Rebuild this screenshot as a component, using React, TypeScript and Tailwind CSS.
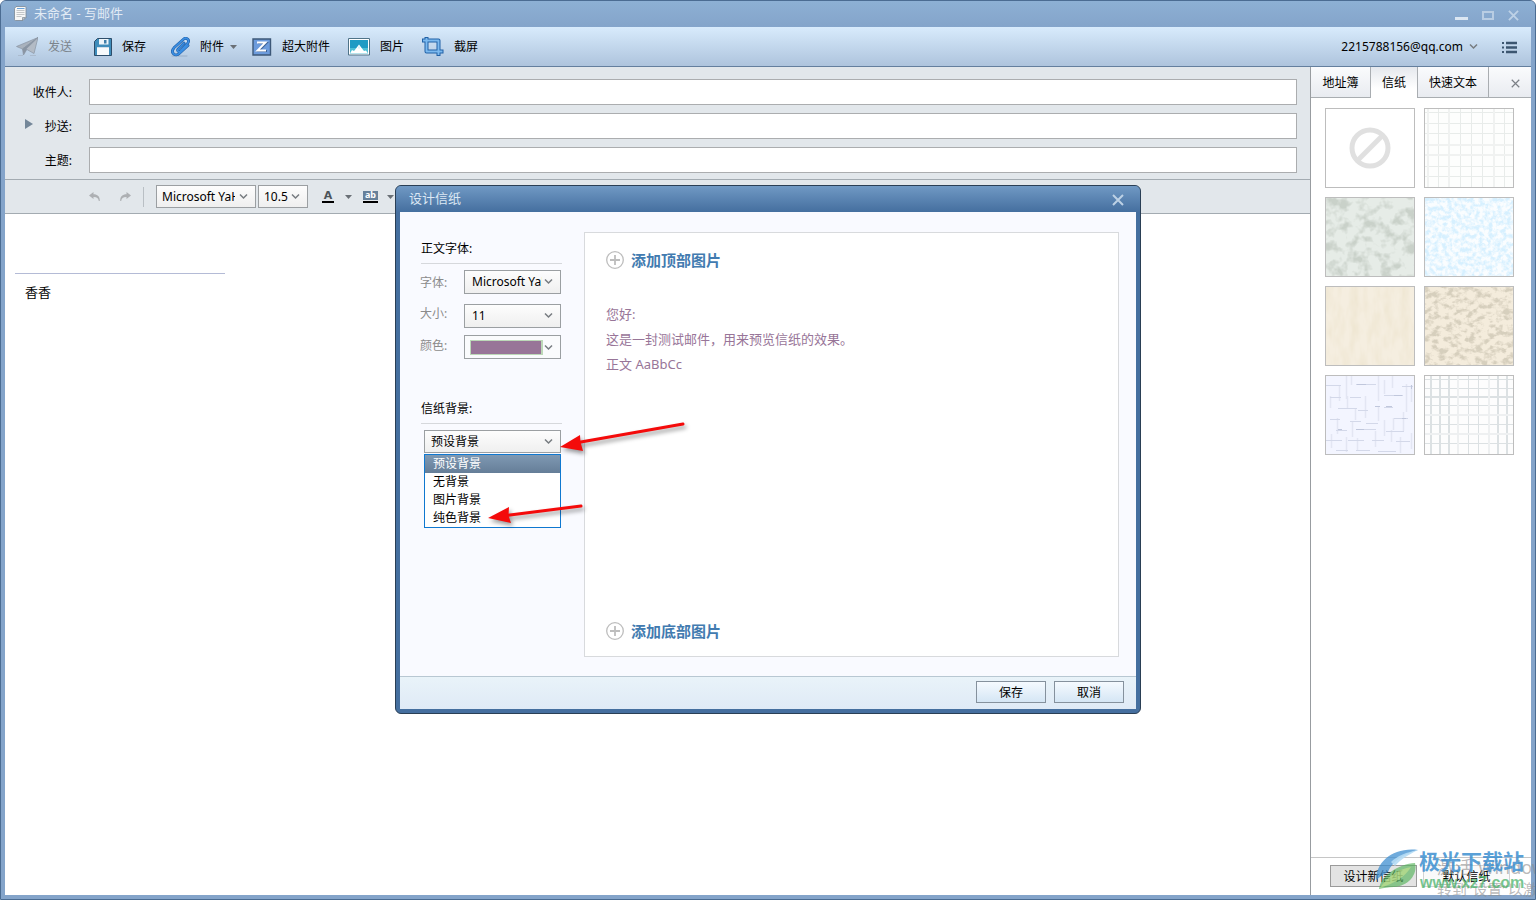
import React from 'react';

const STACK = 'font-["Noto_Sans","Noto_Sans_CJK_SC",sans-serif]';

/* ---------- small glyphs ---------- */

const Chevron: React.FC<{ className?: string }> = ({ className = '' }) => (
  <svg className={className} width="9" height="7" viewBox="0 0 9 7" fill="none" stroke="#777c80" strokeWidth="1.5">
    <path d="M1 1.5 4.5 5 8 1.5" />
  </svg>
);

const Caret: React.FC<{ className?: string }> = ({ className = '' }) => (
  <svg className={className} width="7" height="6" viewBox="0 0 7 6" fill="#6a7076">
    <path d="M0 1h7L3.500 5z" />
  </svg>
);

const CloseMark: React.FC<{ size: number; color: string; width: number }> = ({ size, color, width }) => (
  <svg width={size} height={size} viewBox="0 0 12 12" fill="none" stroke={color} strokeWidth={width}>
    <path d="M1 1 11 11M11 1 1 11" />
  </svg>
);

const PlusCircle: React.FC = () => (
  <svg width="18" height="18" viewBox="0 0 18 18" fill="none" stroke="#bdbdbd">
    <circle cx="9" cy="9" r="8.300" strokeWidth="1.300" />
    <path d="M9 4v10M4 9h10" strokeWidth="1.800" />
  </svg>
);

const NoteIcon: React.FC = () => (
  <svg width="13" height="15" viewBox="0 0 13 15">
    <path d="M2 .500h9a1 1 0 0 1 1 1v10l-3 3h-7.500a1 1 0 0 1-1-1v-11z" fill="#f6f7f7" stroke="#7b8894" strokeWidth=".8" />
    <path d="M3 2.500h7.500" stroke="#6aa3da" />
    <path d="M2.500 4.500h8M2.500 6.500h8M2.500 8.500h8M2.500 10.500h5" stroke="#c3c6c8" />
    <path d="M8.500 14v-2.500h3z" fill="#cfd3d6" stroke="#7b8894" strokeWidth=".7" />
  </svg>
);

/* ---------- toolbar icons ---------- */

const SendIcon: React.FC = () => (
  <svg width="22" height="19" viewBox="0 0 22 19">
    <path d="M2 18.500h5M14 18.500h6" stroke="#a7b6c8" strokeWidth=".8" />
    <path d="M.500 9.500 22 .500 6.500 12z" fill="#a9b2bd" stroke="#8995a3" strokeWidth=".7" />
    <path d="M6.500 12 22 .500 10.500 13 7.500 18z" fill="#8a95a3" stroke="#8995a3" strokeWidth=".7" />
    <path d="M10 12 22 .500 18 16.500z" fill="#b3bbc5" stroke="#8995a3" strokeWidth=".7" />
  </svg>
);

const SaveIcon: React.FC = () => (
  <svg width="18" height="18" viewBox="0 0 18 18">
    <path d="M3.500.500h14v17h-17v-14z" fill="#3f8dbb" stroke="#2d4d6a" />
    <path d="M5 1h9.500v5.500h-9.500z" fill="#eef5fa" />
    <path d="M10 2h2.500v3.500h-2.500z" fill="#3f7ea8" />
    <path d="M3 9h12v8h-12z" fill="#f7fafc" />
    <path d="M3 9.500h12" stroke="#cfdde7" />
  </svg>
);

const ClipIcon: React.FC = () => (
  <svg width="19" height="20" viewBox="0 0 19 20" fill="none" strokeLinecap="round">
    <path d="M1 19h15" stroke="#8fa6bf" strokeWidth=".8" />
    <path
      d="M13 6 7.200 12c-1.500 1.800.700 3.700 2.300 2.100L16.500 6.500c3-3.500-1.300-6.800-4-4.300L3 10.800c-4.200 5 1.500 9.500 5.500 5.500L17 8.500"
      stroke="#1f5fa8"
      strokeWidth="2.800"
    />
    <path
      d="M13 6 7.200 12c-1.500 1.800.700 3.700 2.300 2.100L16.500 6.500c3-3.500-1.300-6.800-4-4.300L3 10.800c-4.200 5 1.500 9.500 5.500 5.500L17 8.500"
      stroke="#3b8fe3"
      strokeWidth="1.600"
    />
  </svg>
);

const BigFileIcon: React.FC = () => (
  <svg width="20" height="18" viewBox="0 0 20 18" fill="none">
    <path d="M1 1h17.500v16h-17.500z" fill="#6c9bdc" stroke="#3d5878" strokeWidth="1.400" />
    <path d="M6 5h8.500L6.500 13H15" stroke="#3f6396" strokeWidth="2" />
    <path d="M5 4.500h8.500L5.500 12.500H14" stroke="#fff" strokeWidth="1.900" />
  </svg>
);

const PictureIcon: React.FC = () => (
  <svg width="22" height="18" viewBox="0 0 22 18">
    <path d="M.500.500h21v16.500h-21z" fill="#fff" stroke="#4f7388" />
    <path d="M2 2h18v13.500h-18z" fill="#1e9bc4" />
    <path d="M2 10h18v5.500h-18z" fill="#4dbfd6" />
    <path d="M2 15.500 4 12l2 1 2-2.500 3-4 3 4 2 2.500 2-.5 2 3z" fill="#fff" />
    <path d="M11 7.500 9.500 11l1.500-1 1.500 1.500z" fill="#d4eef5" />
  </svg>
);

const CropIcon: React.FC = () => (
  <svg width="22" height="19" viewBox="0 0 22 19" fill="none" strokeLinejoin="round">
    <path d="M4.500 0v14.500h17M0 3.500h16.500V19" stroke="#2161a6" strokeWidth="4" />
    <path d="M4.500 1v13.500h16M1 3.500h15.500V18" stroke="#7bb9ef" strokeWidth="2" />
  </svg>
);

const ListIcon: React.FC = () => (
  <svg width="15" height="13" viewBox="0 0 15 13" stroke="#3c5670" fill="none">
    <path d="M0 2h2M0 6.500h2M0 11h2" strokeWidth="2" />
    <path d="M4 2h11M4 6.500h11M4 11h11" strokeWidth="2.600" />
  </svg>
);

const TurnArrow: React.FC<{ flip?: boolean }> = ({ flip }) => (
  <svg width="12" height="10" viewBox="0 0 12 10" className={flip ? '-scale-x-100' : ''}>
    <path d="M0 3.500 4.500 0v2.300c4 0 6.500 2.200 6.300 6.700h-1C9.500 6 7.800 4.800 4.500 4.900V7z" fill="#adb0b3" />
  </svg>
);

type ToolProps = { icon: React.ReactNode; label: string; className?: string; disabled?: boolean; menu?: boolean };

const Tool: React.FC<ToolProps> = ({ icon, label, className = '', disabled, menu }) => (
  <button type="button" disabled={disabled} className={`flex items-center gap-2.5 ${disabled ? 'text-[#7b848c]' : 'text-black'} ${className}`}>
    {icon}
    <span>{label}</span>
    {menu && <Caret className="-ml-1" />}
  </button>
);

/* ---------- form pieces ---------- */

const Field: React.FC<{ id: string; label: string; expandable?: boolean }> = ({ id, label, expandable }) => (
  <div className="flex items-center">
    <div className="flex w-[84px] items-center justify-end pt-0.5 pr-[17px]">
      {expandable && (
        <button type="button" aria-label={label} className="mr-3 mb-1.5">
          <svg width="8" height="10" viewBox="0 0 8 10" fill="#748799">
            <path d="M0 0 8 5 0 10z" />
          </svg>
        </button>
      )}
      <label htmlFor={id}>{label}:</label>
    </div>
    <input id={id} type="text" className="h-[26px] min-w-0 flex-1 border border-[#abadaf] bg-white px-2 outline-none" />
  </div>
);

type PickerProps = { id: string; value: string; className: string; selectClass: string; name?: string };

const Picker: React.FC<PickerProps> = ({ id, value, className, selectClass, name }) => (
  <div className={`relative ${className}`}>
    <select
      id={id}
      aria-label={name}
      defaultValue={value}
      className={`block w-full appearance-none overflow-hidden border border-[#9b9fa2] bg-linear-to-b from-[#fdfdfd] to-[#efefef] whitespace-nowrap text-black outline-none ${selectClass}`}
    >
      <option>{value}</option>
    </select>
    <Chevron className="pointer-events-none absolute top-2 right-2" />
  </div>
);

/* ---------- stationery swatches ---------- */

const Noise: React.FC<{ id: string; freq: string; seed: number; base: string; matrix: string; octaves?: number }> = ({
  id,
  freq,
  seed,
  base,
  matrix,
  octaves = 3,
}) => (
  <>
    <filter id={id} x="0" y="0" width="100%" height="100%" colorInterpolationFilters="sRGB">
      <feTurbulence type="fractalNoise" baseFrequency={freq} numOctaves={octaves} seed={seed} />
      <feColorMatrix values={matrix} />
    </filter>
    <rect width="88" height="78" fill={base} />
    <rect width="88" height="78" filter={`url(#${id})`} />
  </>
);

const papers: { name: string; art: React.ReactNode }[] = [
  {
    name: '无',
    art: (
      <g fill="none" stroke="#e0e0e0" strokeWidth="5">
        <circle cx="44" cy="39" r="18" />
        <path d="M32 51 56 27" />
      </g>
    ),
  },
  {
    name: '浅色方格',
    art: (
      <g fill="none" stroke="#e8ecea">
        <rect width="88" height="78" fill="#fdfefd" stroke="none" />
        <path d="M13.500 0v78M35.500 0v78M46.500 0v78M57.500 0v78M79.500 0v78M0 3.500h88M0 14.500h88M0 24.500h88M0 57.500h88M0 67.500h88" />
        <path d="M3 0v78M24 0v78M69 0v78M0 36h88M0 46h88" stroke="#f0f2f1" strokeWidth="2" />
      </g>
    ),
  },
  {
    name: '灰绿',
    art: <Noise id="moss" freq="0.09" seed={8} base="#e6ece7" matrix="0 0 0 0 .79 0 0 0 0 .82 0 0 0 0 .79 4 0 0 0 -1.800" />,
  },
  {
    name: '浅蓝',
    art: <Noise id="ice" freq="0.22" seed={5} base="#fafdff" matrix="0 0 0 0 .84 0 0 0 0 .94 0 0 0 0 1 3 0 0 0 -1.100" />,
  },
  {
    name: '米色',
    art: <Noise id="sand" freq="0.12 0.04" seed={4} base="#f5eee0" matrix="0 0 0 0 .93 0 0 0 0 .895 0 0 0 0 .81 1.500 0 0 0 -.5" />,
  },
  {
    name: '石纹',
    art: <Noise id="stone" freq="0.14 0.18" seed={11} base="#f4ecdc" matrix="0 0 0 0 .84 0 0 0 0 .81 0 0 0 0 .74 4 0 0 0 -1.800" />,
  },
  {
    name: '织纹',
    art: (
      <g fill="none" stroke="#e3e6f3">
        <rect width="88" height="78" fill="#f3f5ff" stroke="none" />
        <path
          strokeWidth="1.500"
          d="M20.500 0v23M25.500 0v9M52.500 0v25M58.500 4v14M66.500 0v12M13.500 9v16M80.500 8v28M85.500 9v17M29.500 32v12M39.500 20v22M4.500 20v12M21.500 20v13M52.500 30v15M58.500 44v16M67.500 42v12M77.500 36v19M11.500 42v16M26.500 46v15M49.500 55v16M65.500 54v12M20.500 61v15M31.500 62v12M74.500 61v16M85.500 57v16M5.500 58v14"
        />
        <path
          stroke="#d3d8e9"
          d="M30 8.500h20M0 9.500h15M58 19.500h19M4 21.500h11M24 21.500h11M76 10.500h11M12 32.500h19M32 34.500h10M58 31.500h9M4 43.500h10M24 45.500h11M40 47.500h12M68 42.500h14M10 54.500h11M30 53.500h20M60 55.500h18M0 64.500h16M22 64.500h16M46 64.500h12M70 65.500h14M10 74.500h12M30 74.500h14M52 75.500h18"
        />
        <path d="M31 8.500h9M49 30.500h5M60 30.500h6M68 19.500h8M76 42.500h4M30 53.500h8M12 53.500h4M85.500 9v4" stroke="#c0c7dc" />
      </g>
    ),
  },
  {
    name: '方格',
    art: (
      <g fill="none" stroke="#dce1e3">
        <rect width="88" height="78" fill="#fdfdfd" stroke="none" />
        <path d="M43.500 0v78M53.500 0v78M0 3.500h88M0 12.500h88M0 29.500h88M0 48.500h88M0 67.500h88" />
        <path d="M6 0v78M15 0v78M24 0v78M73 0v78M82 0v78M0 21h88" strokeWidth="2" />
        <path d="M33 0v78M64 0v78M0 39h88M0 58h88" stroke="#eef0f1" strokeWidth="2" />
      </g>
    ),
  },
];

const Watermark: React.FC = () => (
  <div className="pointer-events-none absolute right-0 bottom-0 h-[52px] w-[160px] overflow-hidden">
    <div className="absolute top-[8px] left-[62px] text-[18px] leading-6 whitespace-nowrap text-[#8c8c8c]/60">激活 Windows</div>
    <div className="absolute top-[32px] left-[62px] text-[15px] leading-5 whitespace-nowrap text-[#8c8c8c]/60">转到“设置”以激活</div>
    <svg className="absolute top-0 left-0" width="46" height="44" viewBox="0 0 46 44">
      <path d="M1 33C1 15 18 0 43 3 28 7 17 15 13 25 10 27 6 29 1 33z" fill="#3f8fd0" opacity=".75" />
      <path d="M16 15C22 9 32 5 43 3 33 8 26 12 20 19z" fill="#b5dcf4" opacity=".9" />
      <path d="M4 42C6 28 24 17 40 16c3 12-7 23-21 24-6 0-10 1-15 2z" fill="#56b45a" opacity=".65" />
      <path d="M5 41c8-12 19-19 31-21-6 10-16 16-31 21z" fill="#c9e58e" opacity=".6" />
    </svg>
    <div className="absolute top-[2px] left-[44px] text-[21px] leading-6 font-bold whitespace-nowrap text-[#3c8fd0]/85">极光下载站</div>
    <div className='absolute top-[26px] left-[45px] font-["Liberation_Sans",sans-serif] text-[16px] leading-5 font-bold text-[#4ab36a]/75'>www.xz7.com</div>
  </div>
);

const StationeryPanel: React.FC = () => (
  <aside className="flex w-[221px] shrink-0 flex-col border-l border-[#989ca0] bg-white">
    <div role="tablist" className="flex h-[31px] shrink-0 bg-linear-to-b from-[#fafbfd] to-[#e8ebf0]">
      <button role="tab" type="button" className="w-[60px] border-r border-b border-[#a9adb1] pt-0.5">地址簿</button>
      <button role="tab" type="button" aria-selected="true" className="w-[46px] bg-linear-to-b from-[#e5e8ed] to-white to-70% pt-px">信纸</button>
      <button role="tab" type="button" className="w-[72px] border-x border-b border-[#a9adb1] pt-0.5">快速文本</button>
      <button type="button" aria-label="关闭" className="flex flex-1 items-center justify-center border-b border-[#a9adb1] pt-0.5 pl-2.5">
        <CloseMark size={9} color="#7b8086" width={1.6} />
      </button>
    </div>

    <div className="grid flex-1 grid-cols-[90px_90px] content-start gap-[9px] px-[14px] pt-[10px]">
      {papers.map((p) => (
        <button key={p.name} type="button" aria-label={p.name} className="h-20 border border-[#bdbdbd] bg-white">
          <svg width="88" height="78" viewBox="0 0 88 78">{p.art}</svg>
        </button>
      ))}
    </div>

    <div className="flex h-[38px] shrink-0 gap-1.5 border-t border-[#c6c6c6] pt-[7px] pl-[19px]">
      <button type="button" className="h-[22px] w-[87px] border border-[#9a9a9a] bg-[#e3e3e3] pt-0.5">设计新信纸</button>
      <button type="button" className="h-[22px] w-[87px] border border-[#d4d4d4] bg-[#fafafa] pt-0.5">默认信纸</button>
    </div>
  </aside>
);

/* ---------- stationery dialog ---------- */

const backgrounds = ['预设背景', '无背景', '图片背景', '纯色背景'];

const Pointer: React.FC<{ className: string; width: number; height: number; shaft: string; head: string }> = ({ className, width, height, shaft, head }) => (
  <svg className={`pointer-events-none absolute z-20 overflow-visible drop-shadow-[2px_3px_2px_rgba(0,0,0,0.4)] ${className}`} width={width} height={height}>
    <path d={shaft} stroke="#f40b0b" strokeWidth="3" strokeLinecap="round" />
    <path d={head} fill="#f40b0b" />
  </svg>
);

const DesignDialog: React.FC = () => (
  <div className="absolute inset-0 flex items-center justify-center pb-px">
    <div role="dialog" aria-label="设计信纸" className="relative flex h-[529px] w-[746px] flex-col rounded-md border border-[#2a3f55] bg-[#456f9f] px-1 pb-1">
      <header className="-mx-1 flex h-[26px] shrink-0 items-center justify-between rounded-t-[5px] bg-linear-to-b from-[#7099c4] to-[#456f9f] pr-4 pb-0.5 pl-[13px] text-[13px] text-[#dce8f4]">
        <h2>设计信纸</h2>
        <button type="button" aria-label="关闭" className="pt-1">
          <CloseMark size={12} color="#bdd1e5" width={2} />
        </button>
      </header>

      <div className="flex min-h-0 flex-1 bg-[#f9faff] pt-5 pr-[17px] pb-[19px] pl-5">
        <div className="relative mr-[22px] w-[142px] shrink-0">
          <h3 className="ml-px border-b border-[#d6d8dc] pt-[7px] pb-1 leading-5">正文字体:</h3>
          <div className="mt-1.5 flex items-center justify-between text-[#8b8b8b]">
            <label htmlFor="body-font" className="pt-0.5">字体:</label>
            <Picker id="body-font" value="Microsoft YaHei" className="mr-px w-[97px]" selectClass="h-6 pl-[7px] pr-[18px]" />
          </div>
          <div className="mt-2.5 flex items-center justify-between text-[#8b8b8b]">
            <label htmlFor="body-size" className="pb-1">大小:</label>
            <Picker id="body-size" value="11" className="mr-px w-[97px]" selectClass="h-6 pl-[7px] pr-[18px]" />
          </div>
          <div className="mt-[7px] flex items-center justify-between text-[#8b8b8b]">
            <label htmlFor="body-color" className="pb-0.5">颜色:</label>
            <button id="body-color" type="button" className="mr-px flex h-6 w-[97px] items-center justify-between border border-[#9b9fa2] bg-[#fafbfd] pr-[7px] pl-[5px]">
              <span className="h-[15px] w-[73px] border border-r-2 border-[#bcd8b8] bg-[#987598]" />
              <Chevron />
            </button>
          </div>

          <h3 className="mt-10 ml-px border-b border-[#d6d8dc] pb-1 leading-5">
            <label htmlFor="paper-bg">信纸背景:</label>
          </h3>
          <div className="relative mt-1.5 mr-px ml-1">
            <Picker id="paper-bg" value="预设背景" className="w-full" selectClass="h-[23px] pl-1.5 pr-5" />
            <ul role="listbox" className="absolute top-6 left-0 z-10 w-full border border-[#0f78d0] bg-white leading-[18px]">
              {backgrounds.map((b, i) => (
                <li
                  key={b}
                  role="option"
                  aria-selected={i === 0}
                  className={`h-[18px] pl-2 ${i === 0 ? 'bg-linear-to-b from-[#7f99b3] to-[#657e98] text-white' : 'text-black'}`}
                >
                  {b}
                </li>
              ))}
            </ul>
            <Pointer className="top-[-8px] left-[136px]" width={126} height={34} shaft="M18 20.500 123 2" head="M0 25 20 13 20.500 20 23 29z" />
            <Pointer className="top-[74px] left-[64px]" width={96} height={24} shaft="M18 11.500 93 2" head="M0 14 21 3 20.500 11.500 23 19z" />
          </div>
        </div>

        <section className="flex flex-1 flex-col justify-between border border-[#d8dadd] bg-white py-4 pl-[21px]">
          <div>
            <button type="button" className="flex items-center gap-[7px] text-[15px] leading-[22px] font-bold text-[#427bb0]">
              <PlusCircle />
              添加顶部图片
            </button>
            <div className="mt-[31px] text-[13px] leading-[25px] text-[#987598]">
              <p>您好:</p>
              <p>这是一封测试邮件，用来预览信纸的效果。</p>
              <p>正文 AaBbCc</p>
            </div>
          </div>
          <button type="button" className="mb-[-2px] flex items-center gap-[7px] text-[15px] leading-[22px] font-bold text-[#427bb0]">
            <PlusCircle />
            添加底部图片
          </button>
        </section>
      </div>

      <footer className="flex h-[33px] shrink-0 items-center justify-end gap-2 border-t border-[#b8c7d2] bg-linear-to-b from-[#e9f3f9] to-[#dfeaf6] pr-3 pb-0.5">
        <button type="button" className="h-[22px] w-[70px] border border-[#85919d] bg-linear-to-b from-[#f5faff] to-[#d5e6f5] pt-0.5">保存</button>
        <button type="button" className="h-[22px] w-[70px] border border-[#85919d] bg-linear-to-b from-[#f5faff] to-[#d5e6f5] pt-0.5">取消</button>
      </footer>
    </div>
  </div>
);

export default function App() {
  return (
    <div className={`relative flex h-screen flex-col overflow-hidden rounded-t-md border border-[#4b6c92] bg-[#84a4ca] px-1 pb-1 text-[12px] leading-4 text-black ${STACK}`}>
      {/* Title bar */}
      <header className="-mx-1 flex h-[26px] shrink-0 items-center bg-linear-to-b from-[#8db0d4] to-[#84a4ca] pb-0.5 pl-[13px] text-[13px] text-[#e2ebf5]">
        <NoteIcon />
        <h1 className="ml-[7px]">未命名 - 写邮件</h1>
        <div className="mr-4 ml-auto flex items-center gap-[14px]">
          <button type="button" aria-label="最小化" className="mt-2.5 h-[3px] w-[13px] bg-[#dbe6f2]" />
          <button type="button" aria-label="最大化" className="mt-1 h-[9px] w-3 border-2 border-[#b9cde3]" />
          <button type="button" aria-label="关闭" className="mt-1">
            <CloseMark size={11} color="#bdd1e6" width={2} />
          </button>
        </div>
      </header>

      {/* Main toolbar */}
      <div className="flex h-10 shrink-0 items-center border-b border-[#647f9e] bg-linear-to-b from-[#d8ebfc] to-[#aec4dd] pl-[11px]">
        <Tool icon={<SendIcon />} label="发送" disabled className="mr-[22px]" />
        <Tool icon={<SaveIcon />} label="保存" className="mr-[25px]" />
        <Tool icon={<ClipIcon />} label="附件" menu className="mr-[15px]" />
        <Tool icon={<BigFileIcon />} label="超大附件" className="mr-[18px]" />
        <Tool icon={<PictureIcon />} label="图片" className="mr-[18px]" />
        <Tool icon={<CropIcon />} label="截屏" />
        <button type="button" className="ml-auto flex items-center gap-1.5">
          2215788156@qq.com
          <Chevron />
        </button>
        <button type="button" aria-label="菜单" className="mr-[14px] ml-6 pt-0.5">
          <ListIcon />
        </button>
      </div>

      <div className="flex min-h-0 flex-1">
        <main className="flex min-w-0 flex-1 flex-col bg-white">
          <form className="flex flex-col gap-2 border-b border-[#a3abb1] bg-[#e2e7eb] pt-3 pr-[13px] pb-1.5">
            <Field id="to" label="收件人" />
            <Field id="cc" label="抄送" expandable />
            <Field id="subject" label="主题" />
          </form>

          {/* Formatting bar */}
          <div className="flex h-[34px] shrink-0 items-center border-b border-[#a3abb1] bg-[#e2e7eb] pl-[84px]">
            <button type="button" aria-label="撤销" className="mr-[18px]"><TurnArrow /></button>
            <button type="button" aria-label="重做"><TurnArrow flip /></button>
            <span className="mr-3 ml-3 h-5 w-px bg-[#b9bfc4]" />
            <Picker id="font" name="字体" value="Microsoft YaHei" className="w-[100px]" selectClass="h-[23px] pl-[5px] pr-5" />
            <Picker id="size" name="字号" value="10.5" className="ml-0.5 w-[50px]" selectClass="h-[23px] pl-[5px] pr-4" />
            <button type="button" aria-label="文字颜色" className="ml-[14px] flex items-center gap-[11px]">
              <span className='h-[13px] w-3 border-b-2 border-black font-["DejaVu_Sans",sans-serif] text-[11px] leading-[11px] font-bold text-[#4c5359]'>A</span>
              <Caret />
            </button>
            <button type="button" aria-label="背景颜色" className="ml-[11px] flex items-center gap-[9px]">
              <span className="border-b-2 border-black pb-px">
                <span className="block h-[9px] w-[15px] bg-[#66809a] text-center text-[9px] leading-[8px] font-bold text-white">ab</span>
              </span>
              <Caret />
            </button>
          </div>

          <article className="flex-1 px-2.5 pt-[59px] text-[13px]">
            <hr className="w-[210px] border-[#b4bbd6]" />
            <p className="mt-2.5 pl-2.5">香香</p>
          </article>
        </main>

        <StationeryPanel />
      </div>

      <DesignDialog />
      <Watermark />
    </div>
  );
}
